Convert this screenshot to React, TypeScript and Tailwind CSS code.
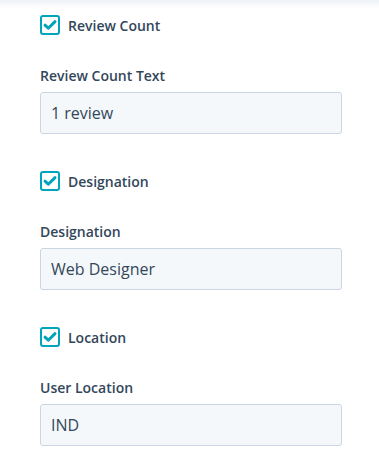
import React from "react";

function Check({ label }: { label: string }) {
  return (
    <div className="flex items-center h-[20px]">
      <div className="w-[20px] h-[20px] rounded-[3px] border-2 border-[#00a4bd] bg-white flex items-center justify-center">
        <svg width="16" height="16" viewBox="0 0 16 16">
          <path d="M3 8.2 L6.3 11.2 L13 4.6" fill="none" stroke="#00a4bd" strokeWidth="3" strokeLinecap="round" strokeLinejoin="round" />
        </svg>
      </div>
      <span className="ml-[8px] text-[14px] font-semibold text-[#33475b]">{label}</span>
    </div>
  );
}

function Field({ label, value }: { label: string; value: string }) {
  return (
    <div className="flex flex-col">
      <span className="text-[14px] font-semibold text-[#33475b] leading-[18px]">{label}</span>
      <div className="mt-[7px] w-[302px] h-[42px] rounded-[3px] border border-[#cbd6e2] bg-[#f5f8fa] flex items-center px-[10px] text-[16px] text-[#33475b]">
        {value}
      </div>
    </div>
  );
}

function Group({ check, label, value, first }: { check: string; label: string; value: string; first?: boolean }) {
  return (
    <div className={first ? "flex flex-col" : "flex flex-col mt-[37px]"}>
      <Check label={check} />
      <div className="mt-[32px]">
        <Field label={label} value={value} />
      </div>
    </div>
  );
}

export default function App() {
  return (
    <div className="w-[379px] h-[466px] bg-white relative overflow-hidden" style={{ fontFamily: '"Open Sans", sans-serif' }}>
      <div className="absolute top-0 left-0 right-0 h-[8px] bg-gradient-to-b from-[#eef2f6] to-white" />
      <div className="relative pt-[15px] pl-[40px]">
        <Group first check="Review Count" label="Review Count Text" value="1 review" />
        <Group check="Designation" label="Designation" value="Web Designer" />
        <Group check="Location" label="User Location" value="IND" />
      </div>
    </div>
  );
}
